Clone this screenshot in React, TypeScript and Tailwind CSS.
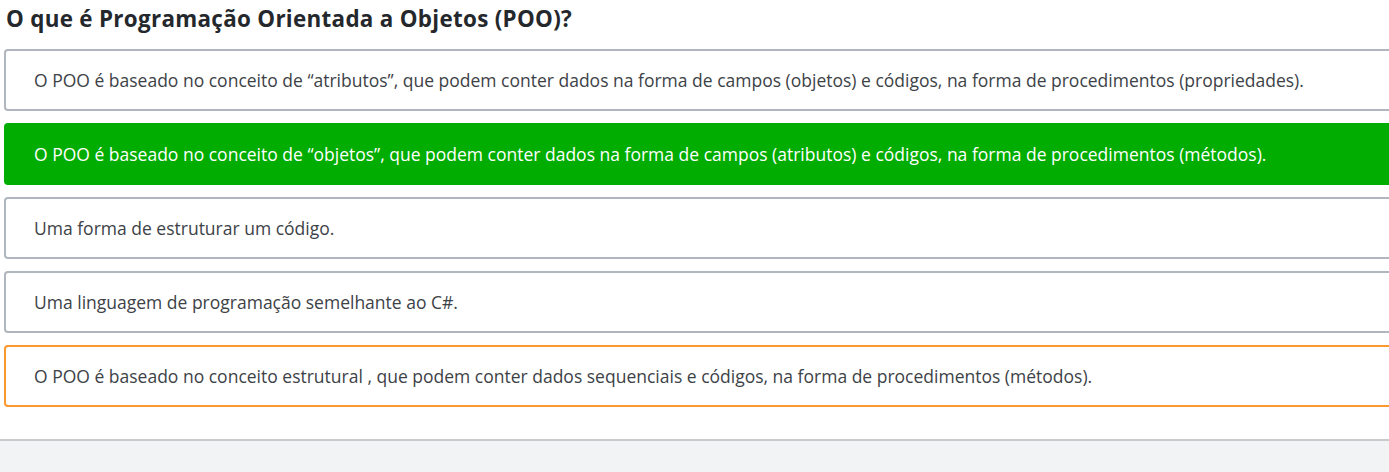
import React from 'react';

type Option = {
  text: string;
  state?: 'correct' | 'selected';
};

const options: Option[] = [
  {
    text: 'O POO é baseado no conceito de “atributos”, que podem conter dados na forma de campos (objetos) e códigos, na forma de procedimentos (propriedades).',
  },
  {
    text: 'O POO é baseado no conceito de “objetos”, que podem conter dados na forma de campos (atributos) e códigos, na forma de procedimentos (métodos).',
    state: 'correct',
  },
  { text: 'Uma forma de estruturar um código.' },
  { text: 'Uma linguagem de programação semelhante ao C#.' },
  {
    text: 'O POO é baseado no conceito estrutural , que podem conter dados sequenciais e códigos, na forma de procedimentos (métodos).',
    state: 'selected',
  },
];

const OptionCard: React.FC<{ option: Option }> = ({ option }) => {
  // correct answer is filled green, picked answer gets an orange outline
  const look =
    option.state === 'correct'
      ? 'bg-[#00ad00] border-[#00ad00] text-white font-medium'
      : option.state === 'selected'
        ? 'bg-white border-[#fb992e] text-[#3d4247]'
        : 'bg-white border-[#b0b6bd] text-[#3d4247]';

  return (
    <div
      className={`w-[1420px] h-[62px] flex items-center pl-[28px] border-2 rounded-[4px] text-[17.5px] ${look}`}
    >
      {option.text}
    </div>
  );
};

export default function App() {
  return (
    <div className="w-[1389px] h-[472px] overflow-hidden bg-white flex flex-col font-['Open_Sans',sans-serif]">
      <div className="pl-[4px] flex-none">
        <h2 className="pl-[2px] h-[49px] leading-[37px] text-[22.4px] tracking-[0.3px] font-bold text-[#24282c]">
          O que é Programação Orientada a Objetos (POO)?
        </h2>
        <div className="flex flex-col gap-[12px]">
          {options.map((o, i) => (
            <OptionCard key={i} option={o} />
          ))}
        </div>
      </div>
      <div className="mt-[32px] flex-1 border-t-2 border-[#c9cacd] bg-[#f2f3f5]" />
    </div>
  );
}
